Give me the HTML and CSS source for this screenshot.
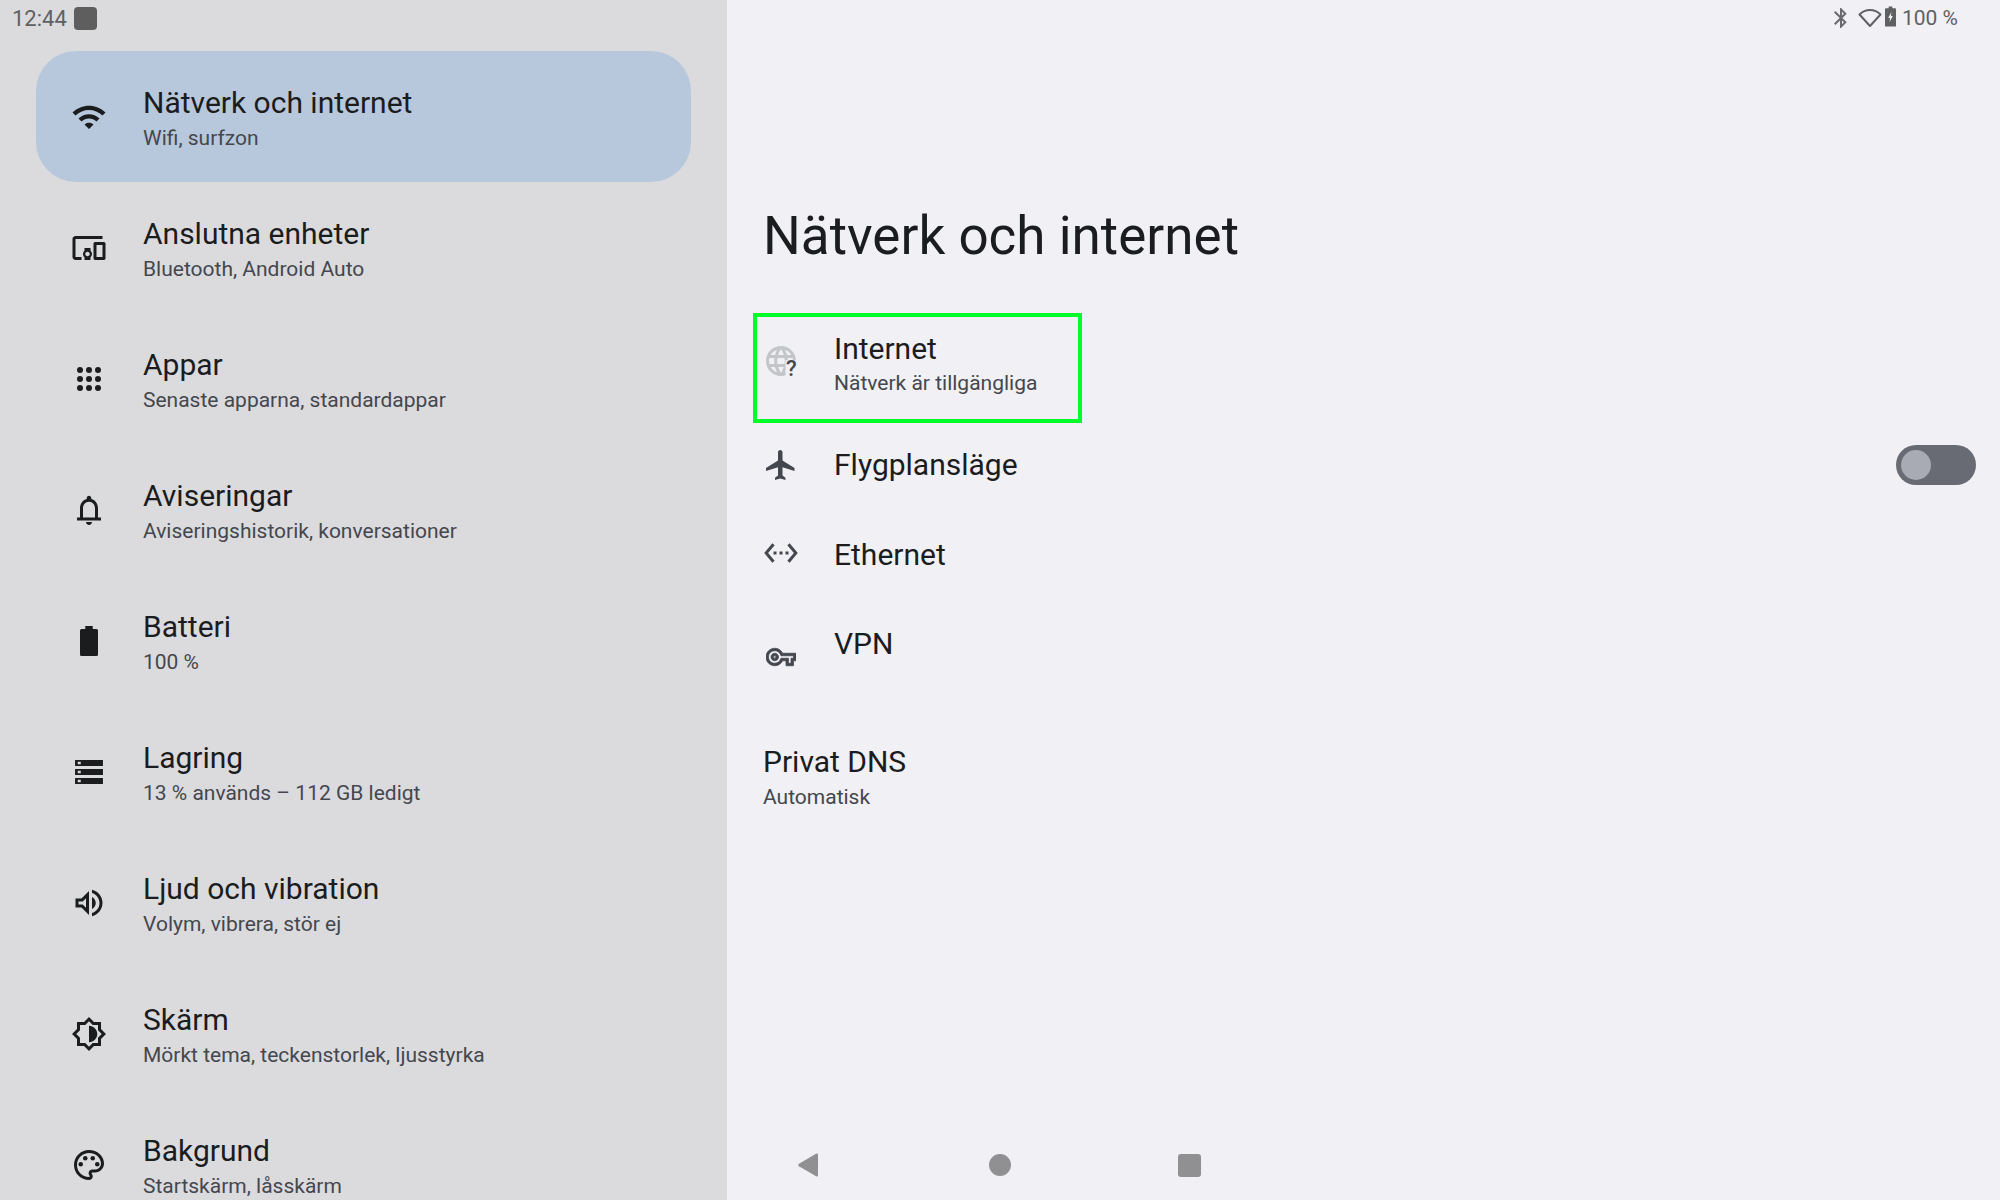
FILE: index.html
```html
<!DOCTYPE html>
<html lang="sv">
<head>
<meta charset="utf-8">
<title>Nätverk och internet</title>
<link rel="stylesheet" href="styles.css">
</head>
<body>
<div class="screen">
  <aside class="side">
    <div class="status status-left"><span>12:44</span><span class="status-square"></span></div>
    <nav class="menu">
      <div class="item item-active">
        <svg class="icon" viewBox="0 0 24 24"><path d="M1 9l2 2c4.97-4.97 13.03-4.97 18 0l2-2C16.93 2.93 7.08 2.93 1 9zm8 8l3 3 3-3c-1.65-1.66-4.34-1.66-6 0zm-4-4l2 2c2.76-2.76 7.24-2.76 10 0l2-2C15.14 9.14 8.87 9.14 5 13z"/></svg>
        <div class="texts"><div class="title">Nätverk och internet</div><div class="sub">Wifi, surfzon</div></div>
      </div>
      <div class="item">
        <svg class="icon" viewBox="0 0 24 24"><path d="M3 6h18V4H3c-1.1 0-2 .9-2 2v12c0 1.1.9 2 2 2h4v-2H3V6zm10 6H9v1.78c-.61.55-1 1.33-1 2.22s.39 1.67 1 2.22V20h4v-1.78c.61-.55 1-1.34 1-2.22s-.39-1.67-1-2.22V12zm-2 5.5c-.83 0-1.5-.67-1.5-1.5s.67-1.5 1.5-1.5 1.5.67 1.5 1.5-.67 1.5-1.5 1.5zM22 8h-6c-.5 0-1 .5-1 1v10c0 .5.5 1 1 1h6c.5 0 1-.5 1-1V9c0-.5-.5-1-1-1zm-1 10h-4v-8h4v8z"/></svg>
        <div class="texts"><div class="title">Anslutna enheter</div><div class="sub">Bluetooth, Android Auto</div></div>
      </div>
      <div class="item">
        <svg class="icon" viewBox="0 0 24 24"><circle cx="6" cy="6" r="2"/><circle cx="12" cy="6" r="2"/><circle cx="18" cy="6" r="2"/><circle cx="6" cy="12" r="2"/><circle cx="12" cy="12" r="2"/><circle cx="18" cy="12" r="2"/><circle cx="6" cy="18" r="2"/><circle cx="12" cy="18" r="2"/><circle cx="18" cy="18" r="2"/></svg>
        <div class="texts"><div class="title">Appar</div><div class="sub">Senaste apparna, standardappar</div></div>
      </div>
      <div class="item">
        <svg class="icon" viewBox="0 0 24 24"><path d="M18,17v-6c0-3.07-1.63-5.64-4.5-6.32V4c0-0.83-0.67-1.5-1.5-1.5S10.5,3.17,10.5,4v0.68C7.63,5.36,6,7.92,6,11v6H4v2h16v-2H18z M16,17H8v-6c0-2.48,1.51-4.5,4-4.5s4,2.02,4,4.5V17z M12,22c1.1,0,2-0.9,2-2h-4C10,21.1,10.9,22,12,22z"/></svg>
        <div class="texts"><div class="title">Aviseringar</div><div class="sub">Aviseringshistorik, konversationer</div></div>
      </div>
      <div class="item">
        <svg class="icon" viewBox="0 0 24 24"><path d="M9.5 2h5v2H17a1 1 0 0 1 1 1v16a1 1 0 0 1-1 1H7a1 1 0 0 1-1-1V5a1 1 0 0 1 1-1h2.500z"/></svg>
        <div class="texts"><div class="title">Batteri</div><div class="sub">100 %</div></div>
      </div>
      <div class="item">
        <svg class="icon" viewBox="0 0 24 24"><path fill-rule="evenodd" d="M2.700 4h18.600v4H2.700zM4.500 5.200v1.600h2V5.200zM2.700 10h18.600v4H2.700zM4.500 11.200v1.600h2v-1.600zM2.700 16h18.600v4H2.700zM4.500 17.200v1.600h2v-1.600z"/></svg>
        <div class="texts"><div class="title">Lagring</div><div class="sub">13 % används – 112 GB ledigt</div></div>
      </div>
      <div class="item">
        <svg class="icon" viewBox="0 0 24 24"><path d="M3 9v6h4l5 5V4L7 9H3zm7-.17v6.34L7.83 13H5v-2h2.83L10 8.830zM16.500 12c0-1.770-1.020-3.290-2.500-4.030v8.050c1.480-.73 2.500-2.250 2.500-4.020zM14 3.230v2.060c2.890.86 5 3.540 5 6.710s-2.110 5.850-5 6.710v2.060c4.010-.91 7-4.490 7-8.770 0-4.280-2.990-7.860-7-8.770z"/></svg>
        <div class="texts"><div class="title">Ljud och vibration</div><div class="sub">Volym, vibrera, stör ej</div></div>
      </div>
      <div class="item">
        <svg class="icon" viewBox="0 0 24 24"><path d="M20 15.310L23.310 12 20 8.690V4h-4.690L12 .69 8.690 4H4v4.690L.69 12 4 15.310V20h4.690L12 23.310 15.310 20H20v-4.690zM18 14.480V18h-3.520L12 20.480 9.520 18H6v-3.520L3.520 12 6 9.520V6h3.520L12 3.520 14.480 6H18v3.520L20.480 12 18 14.480zM12 6.500v11c3.030 0 5.500-2.470 5.500-5.500S15.030 6.500 12 6.500z"/></svg>
        <div class="texts"><div class="title">Skärm</div><div class="sub">Mörkt tema, teckenstorlek, ljusstyrka</div></div>
      </div>
      <div class="item">
        <svg class="icon" viewBox="0 0 24 24"><path d="M12 22C6.490 22 2 17.510 2 12S6.490 2 12 2s10 4.040 10 9c0 3.310-2.690 6-6 6h-1.770c-.28 0-.5.22-.5.5 0 .12.05.23.13.33.41.47.64 1.060.64 1.670 0 1.380-1.120 2.500-2.500 2.500zm0-18c-4.410 0-8 3.590-8 8s3.590 8 8 8c.28 0 .5-.22.5-.5 0-.16-.08-.28-.14-.35-.41-.46-.63-1.050-.63-1.650 0-1.380 1.120-2.500 2.500-2.500H16c2.210 0 4-1.790 4-4 0-3.860-3.590-7-8-7z"/><circle cx="6.500" cy="11.500" r="1.500"/><circle cx="9.500" cy="7.500" r="1.500"/><circle cx="14.500" cy="7.500" r="1.500"/><circle cx="17.500" cy="11.500" r="1.500"/></svg>
        <div class="texts"><div class="title">Bakgrund</div><div class="sub">Startskärm, låsskärm</div></div>
      </div>
    </nav>
  </aside>

  <main class="detail">
    <div class="status status-right">
      <svg class="status-bt" viewBox="0 0 24 24"><path d="M17.710 7.710L12 2h-1v7.590L6.410 5 5 6.410 10.590 12 5 17.590 6.410 19 11 14.410V22h1l5.710-5.710-4.300-4.290 4.300-4.290zM13 5.830l1.880 1.880L13 9.590V5.830zm1.880 10.460L13 18.170v-3.760l1.880 1.880z"/></svg>
      <svg class="status-wifi" viewBox="0 0 24 20"><path d="M1.500 6.500C4.500 3.500 8 2 12 2s7.500 1.500 10.500 4.500L12 18z"/></svg>
      <svg class="status-batt" viewBox="0 0 12 22"><path fill-rule="evenodd" d="M4 0h4v2h3a1 1 0 0 1 1 1v18a1 1 0 0 1-1 1H1a1 1 0 0 1-1-1V3a1 1 0 0 1 1-1h3zM7 6L3.500 12.500H5.500L5 17l3.500-6.500H6.500z"/></svg>
      <span>100 %</span>
    </div>
    <h1 class="heading">Nätverk och internet</h1>
    <section class="rows">
      <div class="row row-internet">
        <div class="globe">
          <svg class="row-icon globe-art" viewBox="0 0 24 24">
            <path d="M11.990 2C6.470 2 2 6.480 2 12s4.470 10 9.990 10C17.520 22 22 17.520 22 12S17.520 2 11.990 2zm6.930 6h-2.950c-.32-1.250-.78-2.450-1.380-3.560 1.840.63 3.370 1.910 4.330 3.560zM12 4.040c.83 1.200 1.480 2.530 1.910 3.960h-3.820c.43-1.430 1.080-2.760 1.910-3.960zM4.260 14C4.100 13.360 4 12.690 4 12s.1-1.360.26-2h3.380c-.08.66-.14 1.320-.14 2 0 .68.06 1.340.14 2H4.260zm.82 2h2.950c.32 1.250.78 2.450 1.380 3.560-1.840-.63-3.370-1.900-4.330-3.560zm2.950-8H5.080c.96-1.660 2.490-2.930 4.330-3.560C8.810 5.550 8.350 6.750 8.030 8zM12 19.960c-.83-1.200-1.480-2.530-1.910-3.960h3.820c-.43 1.430-1.080 2.760-1.910 3.960zM14.340 14H9.660c-.09-.66-.16-1.320-.16-2 0-.68.07-1.350.16-2h4.680c.09.650.16 1.320.16 2 0 .68-.07 1.340-.16 2zm.25 5.560c.6-1.110 1.060-2.310 1.380-3.560h2.950c-.96 1.650-2.490 2.930-4.330 3.560zM16.360 14c.08-.66.14-1.320.14-2 0-.68-.06-1.340-.14-2h3.380c.16.64.26 1.310.26 2s-.1 1.360-.26 2h-3.380z"/>
            <rect class="globe-mask" x="15" y="11.500" width="9" height="12.500"/>
          </svg>
          <span class="globe-q">?</span>
        </div>
        <div class="texts texts-internet"><div class="title">Internet</div><div class="sub">Nätverk är tillgängliga</div></div>
      </div>
      <div class="row row-line">
        <svg class="row-icon" viewBox="0 0 24 24"><path d="M21 16v-2l-8-5V3.500c0-.83-.67-1.500-1.500-1.500S10 2.670 10 3.500V9l-8 5v2l8-2.500V19l-2 1.500V22l3.500-1 3.500 1v-1.500L13 19v-5.500l8 2.500z"/></svg>
        <div class="title">Flygplansläge</div>
        <div class="toggle"><span class="thumb"></span></div>
      </div>
      <div class="row row-line">
        <svg class="row-icon ethernet" viewBox="0 0 24 24"><path d="M7.770 6.760L6.230 5.480.82 12l5.410 6.520 1.540-1.280L3.420 12l4.350-5.240zM7 13h2v-2H7v2zm10-2h-2v2h2v-2zm-6 2h2v-2h-2v2zm6.770-7.520l-1.540 1.280L20.580 12l-4.350 5.240 1.540 1.280L23.180 12l-5.410-6.520z"/></svg>
        <div class="title">Ethernet</div>
      </div>
      <div class="row row-line row-vpn">
        <svg class="row-icon key" viewBox="0 0 24 24"><path d="M22 19h-6v-4h-2.680c-1.140 2.420-3.600 4-6.320 4-3.860 0-7-3.140-7-7s3.140-7 7-7c2.720 0 5.170 1.580 6.320 4H24v6h-2v4zm-4-2h2v-4h2v-2H11.940l-.23-.67C11.010 8.340 9.110 7 7 7c-2.760 0-5 2.240-5 5s2.240 5 5 5c2.110 0 4.010-1.340 4.710-3.330l.23-.67H18v4zM7 15c-1.650 0-3-1.350-3-3s1.350-3 3-3 3 1.350 3 3-1.350 3-3 3zm0-4c-.55 0-1 .45-1 1s.45 1 1 1 1-.45 1-1-.45-1-1-1z"/></svg>
        <div class="title">VPN</div>
      </div>
      <div class="plain">
        <div class="title">Privat DNS</div>
        <div class="sub">Automatisk</div>
      </div>
    </section>
    <footer class="navbar">
      <svg class="nav-back" viewBox="0 0 20 24"><path d="M18.500 0.500Q20 0 20 2V22Q20 24 18.500 23.500L1 13.200Q-0.500 12 1 10.800z"/></svg>
      <span class="nav-home"></span>
      <span class="nav-recent"></span>
    </footer>
  </main>
</div>
</body>
</html>
```

FILE: styles.css
```css
*, *::after { box-sizing: border-box; }
html, body { margin: 0; padding: 0; }
body {
  font-family: Roboto, "Noto Sans", sans-serif;
  color: #1b1c1e;
}
.screen {
  display: flex;
  width: 2000px;
  height: 1200px;
  overflow: hidden;
}
.side {
  width: 727px;
  flex: none;
  height: 1200px;
  overflow: hidden;
  background: #dbdbde;
}
.status {
  display: flex;
  align-items: center;
  height: 36px;
  color: #5f6062;
}
.status-left {
  gap: 7px;
  padding-left: 12px;
  font-size: 22px;
}
.status-square {
  width: 23px;
  height: 23px;
  border-radius: 4px;
  background: #5e5e5e;
}
.menu {
  margin: 15px 36px 0;
}
.item {
  display: flex;
  align-items: center;
  gap: 36px;
  height: 131px;
  padding-left: 35px;
  border-radius: 40px;
}
.item-active { background: #b8c8dc; }
.icon {
  width: 36px;
  height: 36px;
  flex: none;
  fill: #1b1c1e;
}
.texts { padding-top: 5px; }
.item .title { margin-bottom: 1px; }
.texts-internet { padding: 0 0 3px; }
.title {
  font-size: 30px;
  line-height: 36px;
  color: #1b1c1e;
}
.sub {
  font-size: 21px;
  line-height: 32px;
  color: #44474e;
}
.detail {
  flex: 1;
  min-width: 0;
  display: flex;
  flex-direction: column;
  background: #f0f0f5;
}
.status-right {
  justify-content: flex-end;
  padding-right: 42px;
  gap: 3px;
  font-size: 21px;
}
.status-bt { width: 24px; height: 24px; fill: #6a6a6c; margin-right: 2px; }
.status-wifi { width: 24px; height: 20px; fill: none; stroke: #5f6062; stroke-width: 2; stroke-linejoin: round; }
.status-batt { width: 11px; height: 21px; fill: #5f6062; margin-right: 3px; margin-bottom: 4px; }
.heading {
  margin: 0;
  padding: 171px 0 0 36px;
  font-size: 53px;
  line-height: 58px;
  font-weight: 400;
  color: #1b1c1e;
}
.rows {
  flex: 1;
  padding: 48px 0 0 36px;
}
.row {
  position: relative;
  display: flex;
  align-items: center;
  gap: 35px;
}
.row-internet { height: 107px; }
.row-internet::after {
  content: "";
  position: absolute;
  left: -10px;
  top: 0;
  width: 329px;
  height: 110px;
  border: 4px solid #00ff2a;
}
.row-line { height: 90px; }
.row-vpn .title { margin-bottom: 2px; }
.row-icon {
  width: 36px;
  height: 36px;
  flex: none;
  fill: #44474e;
}
.globe {
  position: relative;
  width: 36px;
  height: 36px;
  flex: none;
  margin-bottom: 11px;
}
.globe-art { display: block; fill: #c4c5c8; }
.globe-mask { fill: #f0f0f5; }
.globe-q {
  position: absolute;
  left: 23px;
  top: 15px;
  font-size: 22px;
  line-height: 22px;
  font-weight: 500;
  color: #44474e;
}
.ethernet { margin-bottom: 4px; }
.key {
  width: 30px;
  height: 30px;
  margin: 24px 3px 0;
  stroke: #44474e;
  stroke-width: 0.6;
}
.toggle {
  display: flex;
  align-items: center;
  width: 80px;
  height: 40px;
  margin-left: auto;
  margin-right: 24px;
  padding-left: 5px;
  border-radius: 20px;
  background: #686b73;
}
.thumb {
  width: 30px;
  height: 30px;
  border-radius: 50%;
  background: #a8abb3;
}
.plain { padding-top: 54px; }
.plain .sub { padding-top: 1px; }
.navbar {
  display: flex;
  align-items: center;
  height: 70px;
  flex: none;
  padding: 0 0 0 71px;
}
.nav-back { width: 20px; height: 24px; fill: #909092; }
.nav-home { width: 22px; height: 22px; margin: 0 167px 0 171px; border-radius: 50%; background: #909092; }
.nav-recent { width: 23px; height: 23px; border-radius: 3px; background: #909092; }
```
